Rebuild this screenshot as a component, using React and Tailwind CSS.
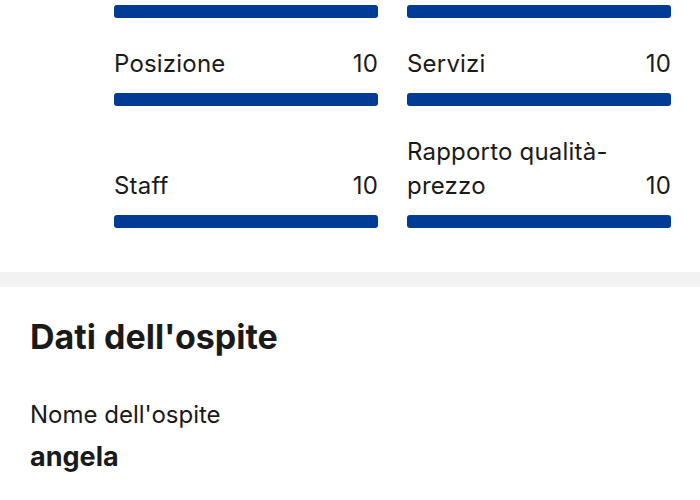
import React from 'react';

const scores = [
  { label: 'Posizione', value: 10 },
  { label: 'Servizi', value: 10 },
  { label: 'Staff', value: 10 },
  { label: 'Rapporto qualità-prezzo', value: 10 },
];

function Bar() {
  return <div className="h-[13px] w-full rounded-[3px] bg-[#003b95]" />;
}

function ScoreBar({ label, value }) {
  return (
    <div className="flex flex-col justify-end">
      <div className="flex items-end justify-between gap-4 text-[24px] leading-[34px] tracking-[0.2px] text-[#1a1a1a]">
        <span>{label}</span>
        <span>{value}</span>
      </div>
      <div className="mt-3">
        <Bar />
      </div>
    </div>
  );
}

export default function App() {
  return (
    <div
      className="h-[500px] w-[700px] overflow-hidden bg-white"
      style={{ fontFamily: 'Inter, "Noto Sans", sans-serif' }}
    >
      {/* Review scores (top row scrolled off, only its bars show) */}
      <div className="grid grid-cols-2 gap-x-[29px] gap-y-[29px] pb-[44px] pl-[114px] pr-[29px] pt-[5px]">
        <Bar />
        <Bar />
        {scores.map((s) => (
          <ScoreBar key={s.label} label={s.label} value={s.value} />
        ))}
      </div>

      <div className="h-[15px] bg-[#f2f2f2]" />

      {/* Guest details */}
      <div className="px-[30px] pt-[30px]">
        <h2 className="text-[34px] font-bold leading-[40px] text-[#1a1a1a]">Dati dell'ospite</h2>
        <p className="mt-[43px] text-[24px] leading-[30px] text-[#1a1a1a]">Nome dell'ospite</p>
        <p className="mt-[10px] text-[27px] font-bold leading-[34px] text-[#1a1a1a]">angela</p>
      </div>
    </div>
  );
}
